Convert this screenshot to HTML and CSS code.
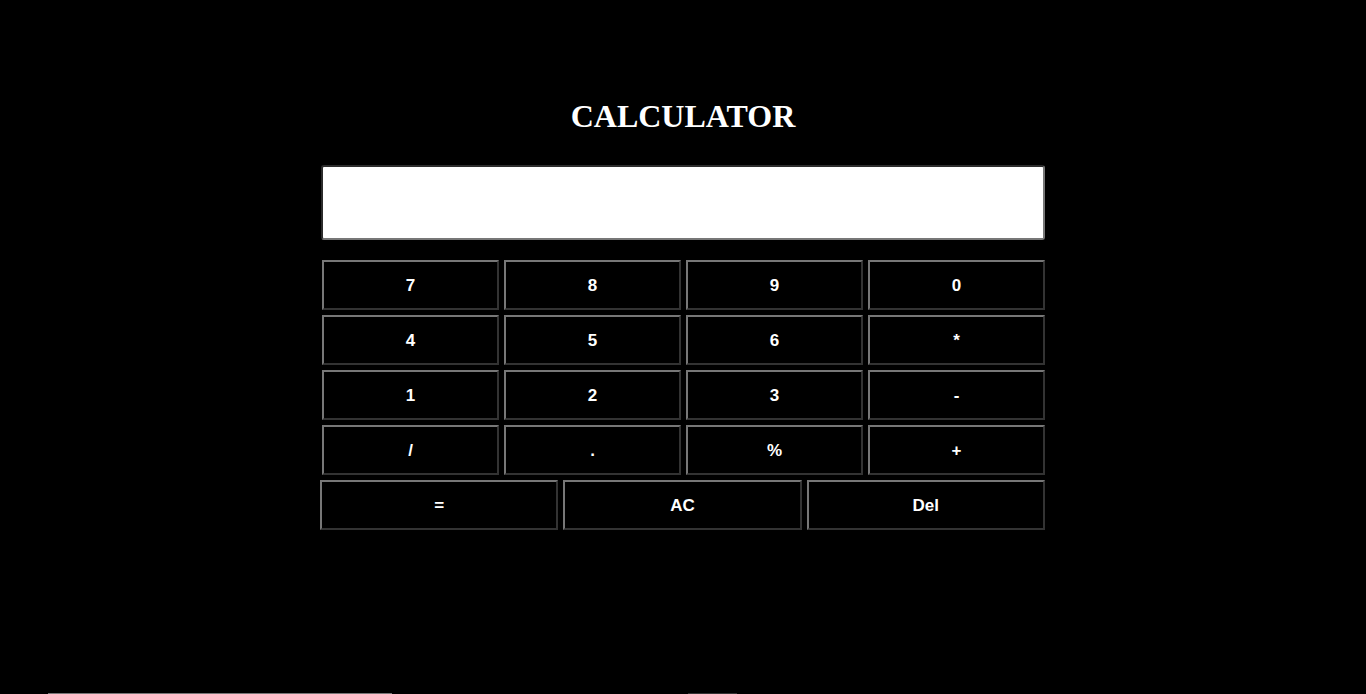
FILE: index.html
```html
<!DOCTYPE html>
<html>
<head>
<meta charset="utf-8">
<title>Calculator</title>
<link rel="stylesheet" href="styles.css">
</head>
<body>
<main class="calc">
  <h1 class="title">CALCULATOR</h1>
  <input class="display" type="text">
  <div class="keys">
    <button class="key">7</button>
    <button class="key">8</button>
    <button class="key">9</button>
    <button class="key">0</button>
    <button class="key">4</button>
    <button class="key">5</button>
    <button class="key">6</button>
    <button class="key">*</button>
    <button class="key">1</button>
    <button class="key">2</button>
    <button class="key">3</button>
    <button class="key">-</button>
    <button class="key">/</button>
    <button class="key">.</button>
    <button class="key">%</button>
    <button class="key">+</button>
  </div>
  <div class="keys keys-last">
    <button class="key">=</button>
    <button class="key">AC</button>
    <button class="key">Del</button>
  </div>
</main>
<div class="footer">
  <span class="bar bar-a"></span>
  <span class="bar bar-b"></span>
</div>
</body>
</html>
```

FILE: styles.css
```css
html, body {
  margin: 0;
  padding: 0;
  background: #000;
  height: 694px;
  overflow: hidden;
}
.calc {
  display: flex;
  flex-direction: column;
  align-items: center;
}
.title {
  margin: 98px 0 30px;
  font-family: "Liberation Serif", "Times New Roman", serif;
  font-weight: bold;
  font-size: 32px;
  line-height: 37px;
  color: #fff;
}
.display {
  box-sizing: border-box;
  width: 724px;
  height: 75px;
  margin: 0 0 20px;
  background: #fff;
  border: 2px solid;
  border-color: #2c2c2c #777 #777 #2c2c2c;
  border-radius: 3px;
  padding: 0 8px;
  font-family: "Liberation Sans", Arial, sans-serif;
  font-size: 24px;
  outline: none;
}
.keys {
  display: grid;
  grid-template-columns: repeat(4, 1fr);
  gap: 5px;
  width: 723px;
  margin-left: 1px;
}
.keys-last {
  grid-template-columns: repeat(3, 1fr);
  width: 725px;
  margin: 5px 0 0 -1px;
}
.key {
  box-sizing: border-box;
  height: 50px;
  margin: 0;
  padding: 1px 0 0;
  background: #000;
  color: #fff;
  border: 2px solid;
  border-color: #777 #333 #333 #777;
  font-family: "Liberation Sans", Arial, sans-serif;
  font-weight: bold;
  font-size: 17px;
  cursor: pointer;
}
.footer {
  display: flex;
  margin-top: 163px;
  height: 1px;
}
.bar {
  display: block;
  height: 1px;
}
.bar-a {
  width: 344px;
  margin-left: 48px;
  background: #777;
}
.bar-b {
  width: 49px;
  margin-left: 296px;
  background: #333;
}
```
